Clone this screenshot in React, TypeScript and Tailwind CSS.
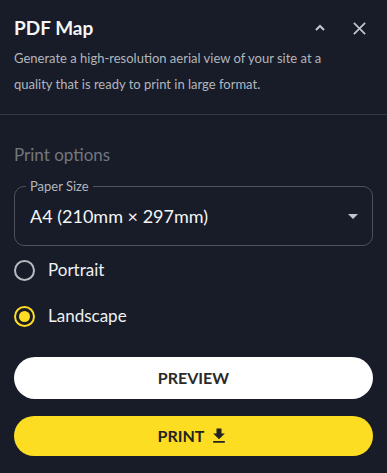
import React from "react";

export default function App() {
  return (
    <div
      className="w-[387px] h-[473px] bg-[#171c28] overflow-hidden"
      style={{ fontFamily: "Lato, 'Noto Sans', sans-serif" }}
    >
      <div className="px-[14px] pt-[16px]">
        <div className="flex items-center justify-between h-[24px]">
          <h1 className="text-[19px] leading-[24px] font-bold text-[#f4f5f7]">PDF Map</h1>
          <div className="flex items-center gap-[26px] pr-[6px]">
            <svg width="12" height="12" viewBox="0 0 12 12" className="text-[#c3c6cc]">
              <path d="M2 8 L6 4 L10 8" fill="none" stroke="currentColor" strokeWidth="2" />
            </svg>
            <svg width="15" height="15" viewBox="0 0 16 16" className="text-[#c3c6cc]">
              <path d="M2 2 L14 14 M14 2 L2 14" fill="none" stroke="currentColor" strokeWidth="1.8" />
            </svg>
          </div>
        </div>
        <p className="mt-[5px] w-[330px] text-[13px] leading-[26px] text-[#b2b6bd]">
          Generate a high-resolution aerial view of your site at a quality that is ready to print in large format.
        </p>
      </div>
      <div className="mt-[17px] h-px bg-[#323845]" />
      <div className="px-[14px]">
        <div className="mt-[28px] text-[17px] leading-[24px] text-[#72777f]">Print options</div>
        <div className="relative mt-[19px] h-[60px] rounded-[10px] border border-[#4b515d] flex items-center justify-between pl-[15px] pr-[14px]">
          <span className="absolute -top-[10px] left-[11px] px-[4px] bg-[#171c28] text-[13px] leading-[18px] text-[#b2b6bd]">
            Paper Size
          </span>
          <span className="text-[18px] text-[#f4f5f7]">A4 (210mm × 297mm)</span>
          <svg width="10" height="5" viewBox="0 0 10 5" className="text-[#c3c6cc]">
            <path d="M0 0 L10 0 L5 5 Z" fill="currentColor" />
          </svg>
        </div>
        <div className="mt-[13px] flex items-center h-[22px]">
          <span className="w-[21px] h-[21px] rounded-full border-2 border-[#b6bac1]" />
          <span className="ml-[13px] text-[17px] text-[#eef0f2]">Portrait</span>
        </div>
        <div className="mt-[24px] flex items-center h-[22px]">
          <span className="w-[21px] h-[21px] rounded-full border-2 border-[#fddc22] flex items-center justify-center">
            <span className="w-[11px] h-[11px] rounded-full bg-[#fddc22]" />
          </span>
          <span className="ml-[13px] text-[17px] text-[#eef0f2]">Landscape</span>
        </div>
        <button className="mt-[30px] w-full h-[42px] rounded-full bg-white text-[16px] font-bold text-[#2a2a2a] flex items-center justify-center">
          PREVIEW
        </button>
        <button className="mt-[17px] w-full h-[40px] rounded-full bg-[#fddd22] text-[16px] font-bold text-[#222] flex items-center justify-center gap-[5px]">
          PRINT
          <svg width="20" height="20" viewBox="0 0 24 24" fill="currentColor">
            <path d="M5 20h14v-2H5v2zM19 9h-4V3H9v6H5l7 7 7-7z" />
          </svg>
        </button>
      </div>
    </div>
  );
}
